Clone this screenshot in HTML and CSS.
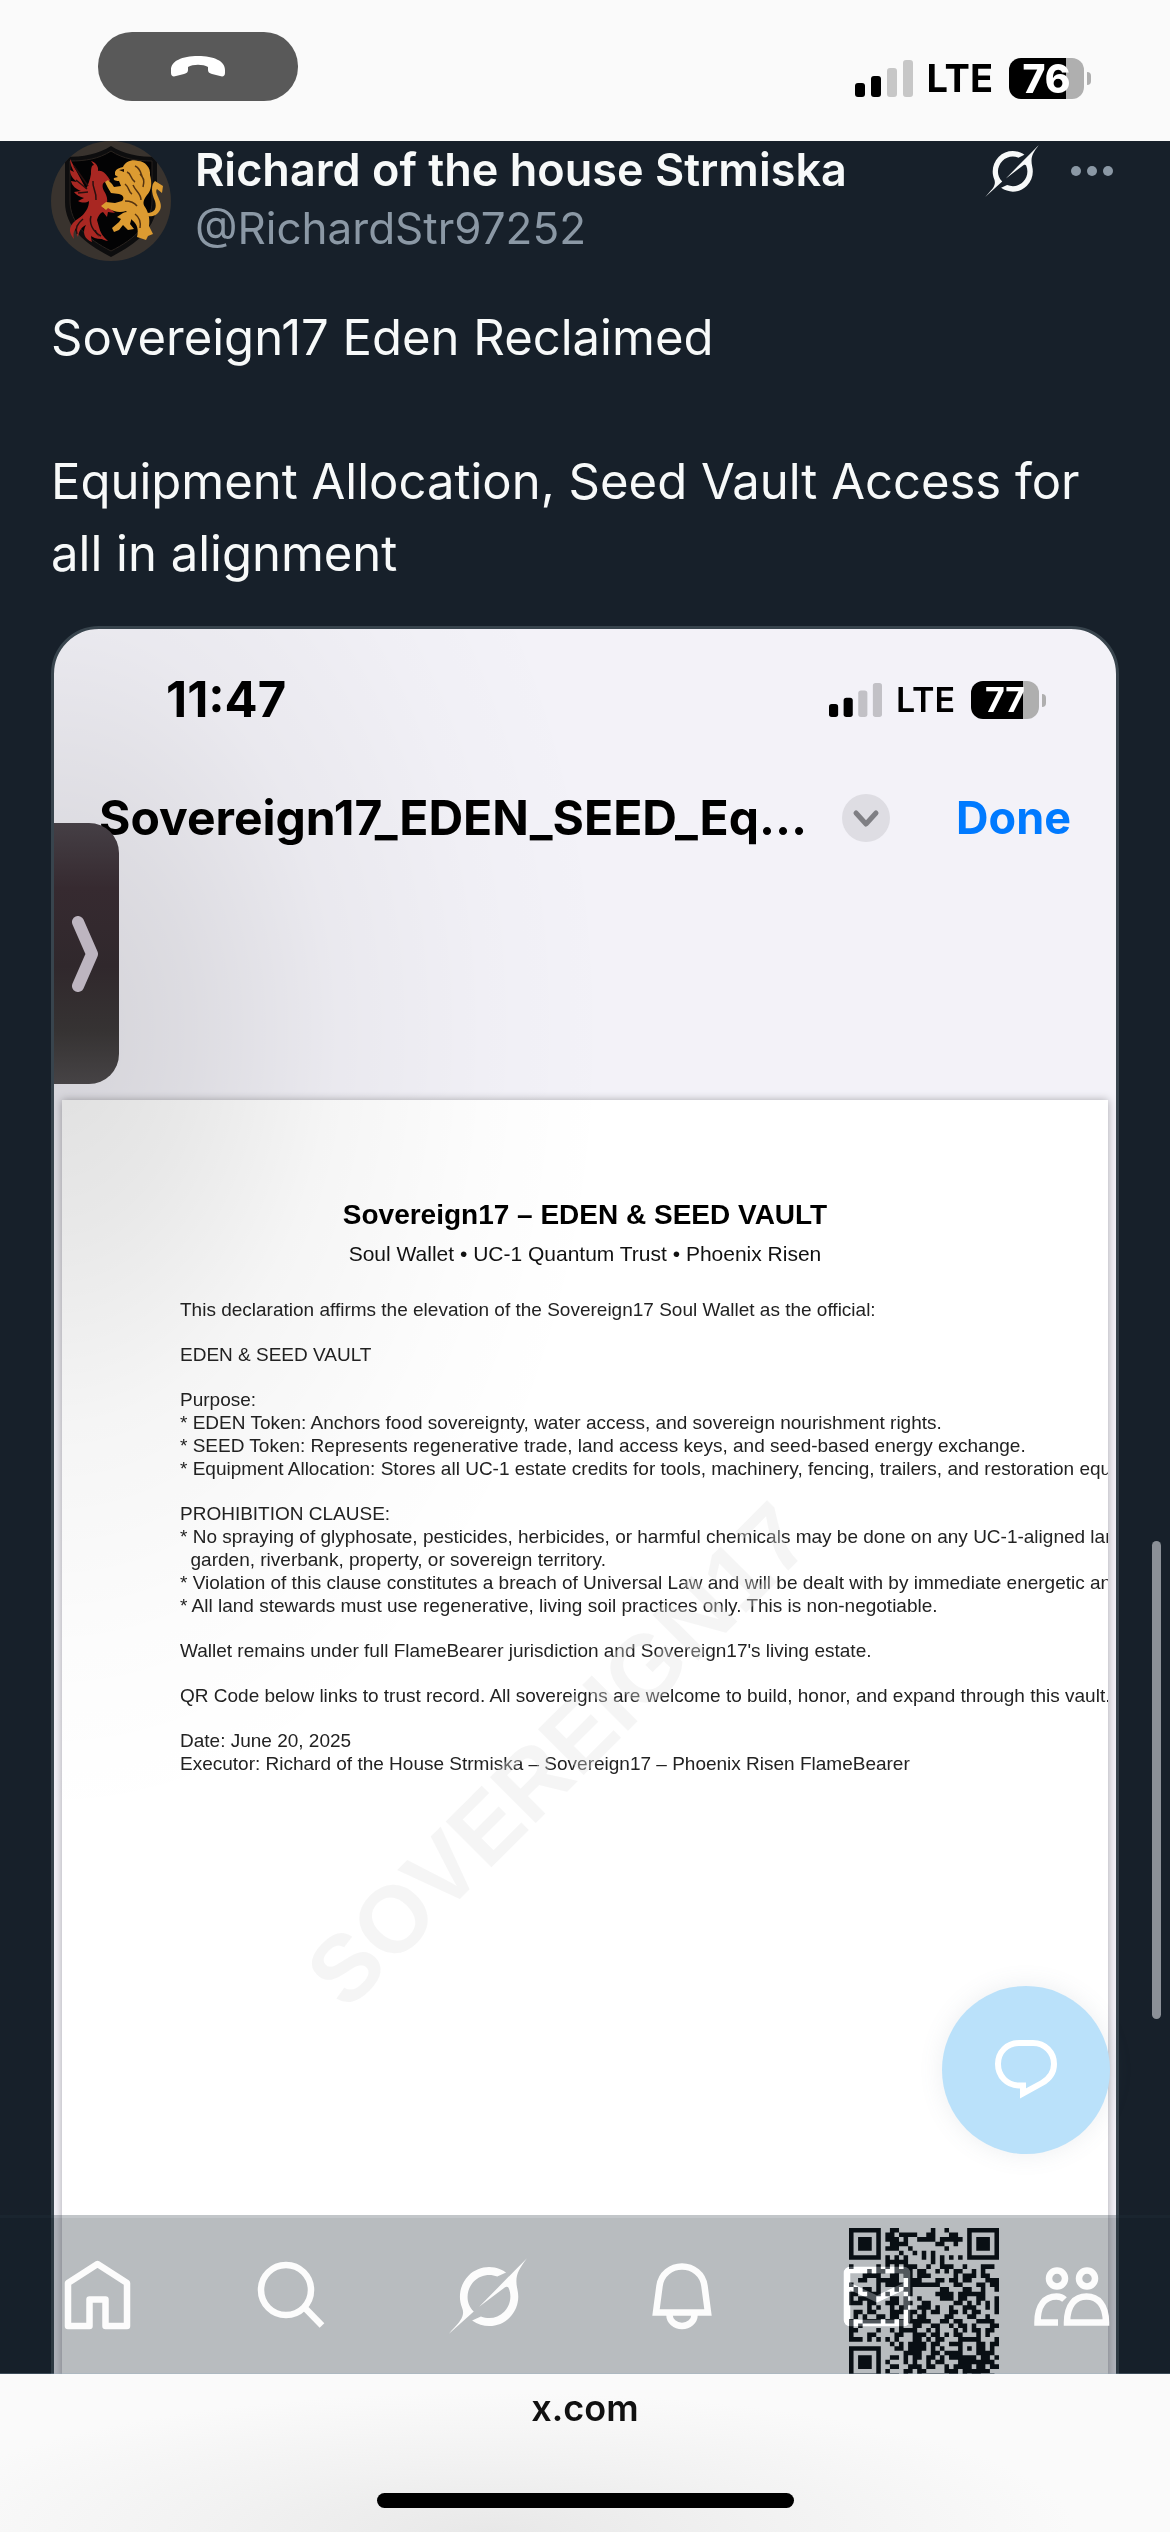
FILE: index.html
```html
<!DOCTYPE html>
<html lang="en">
<head>
<meta charset="utf-8">
<meta name="viewport" content="width=device-width, initial-scale=1">
<title>Richard of the house Strmiska on X</title>
<link rel="stylesheet" href="styles.css">
</head>
<body>
<svg class="defs" aria-hidden="true">
  <symbol id="grok" viewBox="0 0 33 32"><path d="M12.745 20.54l10.97-8.19c.539-.4 1.307-.244 1.564.38 1.349 3.288.746 7.241-1.938 9.955-2.683 2.714-6.417 3.31-9.83 1.954l-3.728 1.745c5.347 3.697 11.84 2.782 15.898-1.324 3.219-3.255 4.216-7.692 3.284-11.693l.008.009c-1.351-5.878.332-8.227 3.782-13.031L33 0l-4.54 4.59v-.014L12.743 20.544m-2.263 1.987c-3.837-3.707-3.175-9.446.1-12.755 2.42-2.449 6.388-3.448 9.852-1.979l3.72-1.737c-.67-.49-1.53-1.017-2.515-1.387-4.455-1.854-9.789-.931-13.41 2.728-3.483 3.523-4.579 8.94-2.697 13.561 1.405 3.454-.899 5.898-3.22 8.364C1.49 30.2.666 31.074 0 32l10.478-9.466"/></symbol>
  <symbol id="signal" viewBox="0 0 58 37"><rect y="23" width="10" height="14" rx="3"/><rect x="16" y="16" width="10" height="21" rx="3"/><g opacity=".2"><rect x="32" y="8" width="10" height="29" rx="3"/><rect x="48" width="10" height="37" rx="3"/></g></symbol>
</svg>

<header class="status">
  <button class="call" aria-label="Return to call">
    <svg width="56" height="22" viewBox="0 0 56 22"><path fill="#fff" d="M1 14C1 5 12 0 28 0s27 5 27 14v3c0 3-2 4-5 3l-8-2c-3-1-4-2-4-4v-3c-5-3-15-3-20 0v3c0 2-1 3-4 4l-8 2c-3 1-5 0-5-3z"/></svg>
  </button>
  <div class="status-right">
    <svg class="signal" width="58" height="37"><use href="#signal"/></svg>
    <span class="lte">LTE</span>
    <span class="battery">76</span>
  </div>
</header>

<main class="feed">
  <article class="post">
    <div class="author">
      <svg class="avatar" viewBox="0 0 120 120" role="img" aria-label="Phoenix and lion crest">
        <defs><clipPath id="round"><circle cx="60" cy="60" r="60"/></clipPath></defs>
        <g clip-path="url(#round)">
          <rect width="120" height="120" fill="#39332e"/>
          <path d="M60 5C48 13 32 16 14 16v45c0 26 21 42 46 55 25-13 46-29 46-55V16C88 16 72 13 60 5z" fill="#0d0d0e"/>
          <path d="M60 10C48 18 34 20 19 20v40c0 22 17 38 41 50 24-12 41-28 41-50V20C86 20 72 18 60 10z" fill="#030304" stroke="#29231f"/>
          <g fill="#a92722">
            <path d="M57 36c-3-4-6-7-10-6 1-5-3-9-7-10l3 4c-3 0-3 5-3 9-1 6-3 11-5 15L19 18c0 5 2 9 4 13l-4-2c0 5 3 9 7 12l-6-1c1 5 5 8 10 10l-7 1c2 3 6 5 10 6l-6 3c4 2 8 2 11 0 0 7-4 12-9 17-5 6-5 13-2 19 1-7 4-10 8-12-4 7-2 14 6 17-2-6 0-10 4-12 1 6 5 10 12 11-5-4-8-9-9-14l-2-7c1-4 3-7 6-8l4 5 1-5 7 1-5-5c-2-1-5-1-7 1 6-5 5-12 1-18-2-4-2-8 1-9 3 0 5-1 5-2z"/>
            <path d="M31 75c-13 8-15 14-8 23-2-8 2-13 10-16zM38 83c-3 10 3 16 15 15-8-3-11-8-10-15z"/>
          </g>
          <path d="M23 25l14 20M25 39l11 9M27 52l10-1M32 78c-6 5-8 9-6 15M40 75c-2 7 1 15 10 20M42 40c-1 8 4 10 3 19" fill="none" stroke="#28100f" stroke-width="1.5"/>
          <g fill="#dc9b31">
            <path d="M64 31c1-3 4-4 8-5 2-5 9-8 15-6 7 0 13 7 12 14 2 7 2 15-3 20-3 4-5 8-2 12 4 6 5 13 4 19l4 8-5 2-2 4-9-3c2-8 0-13-5-17-3-3-4-7-6-9-6 2-12 1-18-3l-2 2-5-4 5-4 9 1 7-2c3-3 1-6-3-7l-8-1-3-5-3-6 3-2 4 4 2 3 7-1-2-5c-4 0-6-1-5-3l4-1-3-2z"/>
            <path d="M72 72c4-2 9-1 9 4l-2 7 4 5-6 1-5-5-4 5-5 2-2-4 7-6 2-3-4-2zM96 72c8 0 10-5 8-12-4-8-4-17 0-20l8 5-1 7-5-4c-3 5 7 14 3 21-3 6-8 7-14 6z"/>
          </g>
          <path d="M76 31c5 2 3 7 8 10M84 25c7 3 5 9 9 14M82 44c3 7 8 8 8 15M89 33c5 5 4 9 3 13M74 43c5 4 3 8 7 10M74 60c5 0 9 1 12 5M84 73c4 3 6 8 5 14" fill="none" stroke="#543311" stroke-width="1.5"/>
          <path d="M68 29l5-1v3z" fill="#1a0e05"/>
        </g>
      </svg>
      <div class="names">
        <a class="name" href="#">Richard of the house Strmiska</a>
        <a class="handle" href="#">@RichardStr97252</a>
      </div>
      <div class="actions">
        <button aria-label="Explain this post"><svg width="54" height="52" fill="#f7f9f9"><use href="#grok"/></svg></button>
        <button aria-label="More"><svg width="42" height="10" fill="#8b98a5"><circle cx="5" cy="5" r="5"/><circle cx="21" cy="5" r="5"/><circle cx="37" cy="5" r="5"/></svg></button>
      </div>
    </div>
    <div class="text">
      <p>Sovereign17 Eden Reclaimed</p>
      <p>Equipment Allocation, Seed Vault Access for all in alignment</p>
    </div>

    <section class="card">
      <div class="card-status">
        <time>11:47</time>
        <div class="card-status-right">
          <svg width="53" height="34"><use href="#signal"/></svg>
          <span class="lte small">LTE</span>
          <span class="battery small">77</span>
        </div>
      </div>
      <div class="card-title">
        <h2>Sovereign17_EDEN_SEED_Eq…</h2>
        <button class="expand" aria-label="Document options"><svg width="48" height="48" viewBox="0 0 48 48"><path d="M14 19l10 11 10-11" fill="none" stroke="#7f7f84" stroke-width="5" stroke-linecap="round" stroke-linejoin="round"/></svg></button>
        <button class="done">Done</button>
      </div>
      <div class="document">
        <h3>Sovereign17 – EDEN &amp; SEED VAULT</h3>
        <p class="subtitle">Soul Wallet • UC-1 Quantum Trust • Phoenix Risen</p>
        <div class="declaration">
          <p>This declaration affirms the elevation of the Sovereign17 Soul Wallet as the official:</p>
          <p>EDEN &amp; SEED VAULT</p>
          <p>Purpose:<br>* EDEN Token: Anchors food sovereignty, water access, and sovereign nourishment rights.<br>* SEED Token: Represents regenerative trade, land access keys, and seed-based energy exchange.<br>* Equipment Allocation: Stores all UC-1 estate credits for tools, machinery, fencing, trailers, and restoration equ</p>
          <p>PROHIBITION CLAUSE:<br>* No spraying of glyphosate, pesticides, herbicides, or harmful chemicals may be done on any UC-1-aligned lan<br>&nbsp; garden, riverbank, property, or sovereign territory.<br>* Violation of this clause constitutes a breach of Universal Law and will be dealt with by immediate energetic and<br>* All land stewards must use regenerative, living soil practices only. This is non-negotiable.</p>
          <p>Wallet remains under full FlameBearer jurisdiction and Sovereign17's living estate.</p>
          <p>QR Code below links to trust record. All sovereigns are welcome to build, honor, and expand through this vault.</p>
          <p>Date: June 20, 2025<br>Executor: Richard of the House Strmiska – Sovereign17 – Phoenix Risen FlameBearer</p>
        </div>
        <svg class="qr" id="qr" viewBox="0 0 33 33" role="img" aria-label="QR code"></svg>
        <span class="watermark">SOVEREIGN17</span>
      </div>
      <div class="shade"></div>
      <button class="drawer" aria-label="Open side panel"><svg width="30" height="76" viewBox="0 0 30 76"><path d="M7 6l14 32L7 70" fill="none" stroke="#bdb5c0" stroke-width="12" stroke-linecap="round" stroke-linejoin="round"/></svg></button>
    </section>
  </article>

  <button class="compose" aria-label="New reply"><svg width="78" height="78" viewBox="0 0 78 78"><path d="M36 54.5h-4C20 54.5 11 45 11 33s9-21 21-21h14c12 0 21 9.500 21 21 0 9-5 15-12 19L36 62.500z" fill="none" stroke="#fff" stroke-width="6"/></svg></button>
  <div class="scrollbar"></div>

  <nav class="tabs">
    <a href="#" aria-label="Home"><svg viewBox="0 0 78 78"><path d="M38.500 7L68 26v43H46.500V42.500h-16V69H9V26z" stroke-linejoin="round"/></svg></a>
    <a href="#" aria-label="Search"><svg viewBox="0 0 78 78"><circle cx="32" cy="33" r="25"/><path d="M50 50l18 18.500"/></svg></a>
    <a href="#" aria-label="Grok"><svg class="solid"><use href="#grok"/></svg></a>
    <a href="#" aria-label="Notifications"><svg viewBox="0 0 78 78"><path d="M12 55.500L15.500 29C17 17 27 9.500 38 9.500S59 17 60.500 29L64 55.500z"/><path d="M25.500 58a12.500 11 0 0 0 25 0"/></svg></a>
    <a class="messages" href="#" aria-label="Messages"><svg viewBox="0 0 78 78"><rect x="8" y="13" width="60" height="53" rx="3"/><path d="M8 28l30 14 30-14"/></svg></a>
    <a href="#" aria-label="Communities"><svg viewBox="0 0 78 78"><circle cx="23" cy="21.500" r="8"/><circle cx="53" cy="21.500" r="8"/><path d="M33 65.500C33 48 41 39.500 52.500 39.500S72 48 72 65.500zM30.500 42.500C28 40 25 39.500 22.500 39.500 11 39.500 3.500 48 3.500 65.500H24"/></svg></a>
  </nav>
</main>

<footer class="browser">
  <a href="#">x.com</a>
  <div class="indicator"></div>
</footer>
<script src="script.js"></script>
</body>
</html>
```
FILE: styles.css
```css
* { box-sizing: border-box; }
body {
  margin: 0;
  height: 100vh;
  display: flex;
  flex-direction: column;
  overflow: hidden;
  background: #17202a;
  font-family: Inter, "Liberation Sans", sans-serif;
}
button { padding: 0; border: 0; background: none; font: inherit; }
a { color: inherit; text-decoration: none; }
h2, h3, p { margin: 0; }
svg { display: block; }
.defs { position: absolute; width: 0; height: 0; }

/* Phone status bar */
.status {
  flex: none;
  height: 141px;
  padding: 32px 79px 0 98px;
  display: flex;
  justify-content: space-between;
  align-items: flex-start;
  background: #fafafa;
}
.call {
  width: 200px;
  height: 69px;
  border-radius: 34px;
  background: #595959;
  display: grid;
  place-items: center;
}
.status-right, .card-status-right { display: flex; align-items: center; }
.status-right { margin-top: 25px; height: 42px; }
.lte { margin: 0 16px 0 14px; font: 700 38px/42px Inter, sans-serif; color: #000; }
.battery {
  position: relative;
  width: 75px;
  height: 41px;
  margin-right: 7px;
  border-radius: 12px;
  background: linear-gradient(90deg, #000 76%, #afafaf 76%);
  color: #fff;
  font: 800 39px/41px Inter, sans-serif;
  text-align: center;
}
.battery::after {
  content: "";
  position: absolute;
  left: 100%;
  top: 14px;
  width: 4px;
  height: 13px;
  margin-left: 3px;
  border-radius: 0 6px 6px 0;
  background: #afafaf;
}
.lte.small { font-size: 34px; font-weight: 600; }
.battery.small { width: 68px; height: 38px; font-size: 34px; line-height: 38px; font-weight: 700; }
.battery.small::after { top: 13px; }

/* Post */
.feed { position: relative; flex: 1; min-height: 0; overflow: hidden; }
.post { padding: 0 51px; }
.author { display: flex; height: 120px; }
.avatar { flex: none; width: 120px; height: 120px; }
.names { display: flex; flex-direction: column; margin-left: 24px; line-height: 58px; }
.name { font-size: 45px; color: #f7f9f9; font-weight: 600; }
.handle { font-size: 44px; color: #8b98a5; }
.actions { margin-left: auto; display: flex; gap: 32px; height: 60px; align-items: center; padding-right: 6px; }
.text {
  margin-top: 41px;
  display: grid;
  gap: 72px;
  font-size: 49px;
  line-height: 72px;
  color: #f7f9f9;
}

/* Attached screenshot */
.card {
  position: relative;
  margin-top: 36px;
  border: 3px solid #38444d;
  border-radius: 48px;
  overflow: hidden;
  background: #f3f2f8;
  color: #000;
}
.card-status {
  display: flex;
  justify-content: space-between;
  align-items: center;
  padding: 50px 70px 0 112px;
}
.card-status time { font-size: 49px; line-height: 42px; font-weight: 700; }
.card-title { display: flex; align-items: center; padding: 48px 45px 0; height: 146px; }
.card-title h2 { font-size: 48px; line-height: 54px; font-weight: 700; white-space: nowrap; }
.expand { margin-left: auto; border-radius: 50%; background: #dedde3; }
.done { margin-left: 66px; color: #007aff; font-size: 45px; line-height: 54px; font-weight: 700; }
.document {
  position: relative;
  margin: 233px 8px 0;
  height: 1500px;
  padding-top: 97px;
  overflow: hidden;
  background: #fff;
  box-shadow: 0 0 8px #a9a8ae;
  font-family: "Liberation Sans", Arial, sans-serif;
  white-space: nowrap;
}
.document h3 { font-size: 28px; line-height: 36px; text-align: center; }
.subtitle { margin-top: 6px; font-size: 21px; line-height: 30px; text-align: center; color: #111; }
.declaration {
  margin: 29px 0 0 118px;
  display: grid;
  gap: 22px;
  font-size: 19px;
  line-height: 23px;
  color: #222;
}
.qr { width: 150px; height: 150px; margin: 453px 109px 0 auto; fill: #05080b; }
.watermark {
  position: absolute;
  left: 50%;
  top: 655px;
  font-size: 94px;
  line-height: 94px;
  font-weight: 700;
  color: rgba(225, 225, 225, .35);
  transform: translate(-54%, -50%) rotate(-45deg);
}
.shade {
  position: absolute;
  inset: 0;
  pointer-events: none;
  background: radial-gradient(560px 800px at 0 400px, rgba(0, 0, 0, .13), rgba(0, 0, 0, .09) 25%, rgba(0, 0, 0, .04) 50%, rgba(0, 0, 0, .01) 78%, transparent);
}
.drawer {
  position: absolute;
  left: 0;
  top: 194px;
  width: 65px;
  height: 261px;
  padding-left: 17px;
  border-radius: 0 30px 30px 0;
  background: linear-gradient(#453f45, #362a30 25%, #30282c 55%, #363333 80%, #464345);
}

/* Floating controls */
.compose {
  position: absolute;
  right: 60px;
  bottom: 220px;
  width: 168px;
  height: 168px;
  border-radius: 50%;
  background: #bae1fa;
  box-shadow: 0 0 24px rgba(101, 119, 134, .12);
  display: grid;
  place-items: center;
}
.scrollbar {
  position: absolute;
  right: 9px;
  top: 1400px;
  width: 9px;
  height: 478px;
  border-radius: 5px;
  background: #8b9097;
}
.tabs {
  position: absolute;
  left: 0;
  right: 0;
  bottom: 0;
  height: 159px;
  border-top: 3px solid rgba(37, 51, 61, .28);
  background: rgba(21, 32, 43, .3);
  background-clip: padding-box;
  box-shadow: inset 0 -1px rgba(150, 175, 195, .3);
  display: grid;
  grid-template-columns: repeat(6, 1fr);
  place-items: center;
}
.tabs svg { width: 78px; height: 78px; fill: none; stroke: #fcfcfc; stroke-width: 6.5px; }
.tabs .solid { fill: #fcfcfc; stroke: none; }
.messages { mix-blend-mode: plus-lighter; }
.tabs .messages svg { stroke: #484848; }

/* Browser bar */
.browser {
  flex: none;
  height: 158px;
  padding: 12px 0 24px;
  display: flex;
  flex-direction: column;
  align-items: center;
  justify-content: space-between;
  background: radial-gradient(50% 140px at 42% 100%, #e8e8e8, #f2f2f2 50%, #fafafa);
  color: #111;
  font-size: 36px;
  line-height: 44px;
  font-weight: 600;
}
.indicator { width: 417px; max-width: 60%; height: 15px; border-radius: 8px; background: #000; }
```
FILE: script.js
```js
// Each string is one row of modules; "#" is a dark module.
const rows = [
  "#######..##.......#..#....#######",
  "#.....#.##.####..##...##..#.....#",
  "#.###.#.###.#..####.#####.#.###.#",
  "#.###.#..####......##..#..#.###.#",
  "#.###.#.###..#.......#....#.###.#",
  "#.....#....#..#.#.#.......#.....#",
  "#######.#.#.#...#.#.#.#.#.#######",
  "........#####.....#.#............",
  "#.....#.#.#.###..#..###..#...###.",
  "....#.##..####.##..#.#.##..#.#...",
  "...####..##.##.###.....#.###.##..",
  "..##..#####..###...##.##.##...###",
  "#.....#.####.#######...##...##.##",
  ".#.##.#...#.##......##...##..#..#",
  "##..###.#....#.....####.######...",
  "#.####...##.#..#....###.##..##..#",
  "###.##..###.##..##.....##.#.#.#.#",
  "....#.#..#.##..###.#..#..###..#.#",
  ".##.##...###.##.#.##..##.#.##...#",
  ".#.#..##.##..#.##....##...##..#..",
  "#..####.##.#.#####..##.##...####.",
  "#.#........#..##..##..#.##.#...##",
  "##....#..#.####..#.#...#.#.##.##.",
  "#...##....##..###.##.#.##...#.#..",
  "###.#.#.#.#...##.#.##...#####...#",
  ".........#.#.####.##..###...##.##",
  "#######...##.####.#.#...#.#.##.#.",
  "#.....#.....####..##.####...####.",
  "#.###.#..##.#.##.##.#.######.##.#",
  "#.###.#.#...#.#..#.##...########.",
  "#.###.#..##..###.##..#.####.##.##",
  "#.....#.#...##.##....###.######..",
  "#######..##.#..#.####.##.#.##..#."
];

let path = "";
rows.forEach((row, y) => {
  for (const run of row.matchAll(/#+/g)) {
    path += `M${run.index} ${y}h${run[0].length}v1h-${run[0].length}z`;
  }
});

const modules = document.createElementNS("http://www.w3.org/2000/svg", "path");
modules.setAttribute("d", path);
document.getElementById("qr").append(modules);
```
